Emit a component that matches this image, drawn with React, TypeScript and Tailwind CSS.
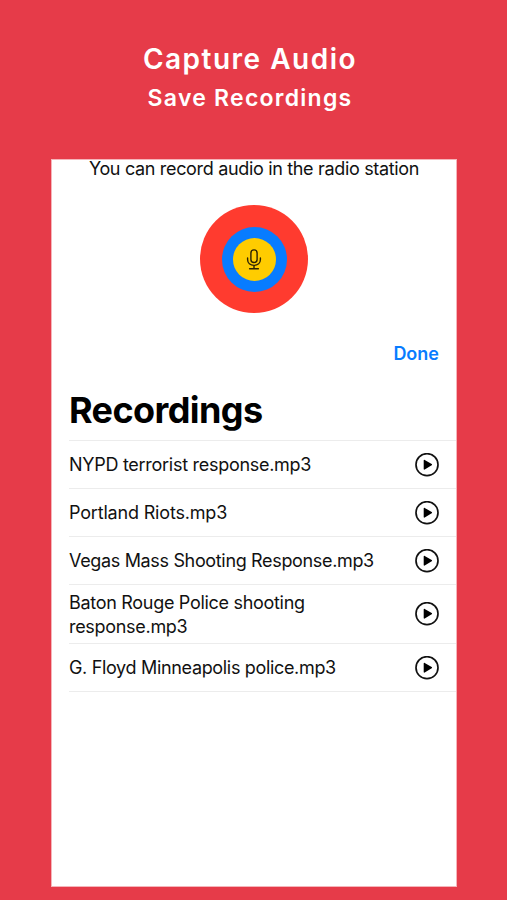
const recordings = [
  { name: 'NYPD terrorist response.mp3', height: 'h-12', tracking: 'tracking-[-0.28px]' },
  { name: 'Portland Riots.mp3', height: 'h-12', tracking: 'tracking-[-0.18px]' },
  { name: 'Vegas Mass Shooting Response.mp3', height: 'h-12', tracking: 'tracking-[-0.34px]' },
  { name: 'Baton Rouge Police shooting response.mp3', height: 'h-[59px]', tracking: 'tracking-[-0.3px]' },
  { name: 'G. Floyd Minneapolis police.mp3', height: 'h-12', tracking: 'tracking-[-0.33px]' },
];

function PlayIcon() {
  return (
    <svg width="24" height="24" viewBox="0 0 24 24" className="shrink-0" aria-hidden="true">
      <circle cx="12" cy="11.7" r="11" fill="none" stroke="#111" strokeWidth="1.7" />
      <path d="M8.7 7.4v8.6c0 .6.5.8 1 .5l7-4.2c.5-.3.5-.9 0-1.2l-7-4.2c-.5-.3-1-.1-1 .5z" fill="#000" />
    </svg>
  );
}

function MicIcon() {
  return (
    <svg width="16" height="22" viewBox="0 0 16 22" fill="none" stroke="#2b2204" strokeWidth="1.4" strokeLinecap="round" aria-hidden="true">
      <rect x="4.9" y="1.9" width="6.2" height="12.6" rx="3.1" />
      <path d="M1.6 9.9v1.7c0 3.5 2.6 5.8 6.4 5.8s6.4-2.3 6.4-5.8V9.9M8 17.4v3.3M3.6 20.7h8.8" />
    </svg>
  );
}

export default function App() {
  return (
    <div className="flex h-[900px] w-[507px] flex-col overflow-hidden bg-[#e63b49] font-['Inter',sans-serif]">
      <header className="flex h-[159px] flex-col items-center pr-[7px] pt-[41px] text-white">
        <h1 className="whitespace-nowrap text-[28px] font-semibold leading-9 tracking-[1.5px]">Capture Audio</h1>
        <h2 className="mt-[3px] whitespace-nowrap text-[23px] font-semibold leading-9 tracking-[1.25px]">Save Recordings</h2>
      </header>
      <main className="ml-[51px] flex h-[728px] w-[406px] flex-col border border-[#f5b5ba] bg-white">
        <p className="h-[45px] whitespace-nowrap pt-px text-center text-[18px] leading-4 tracking-[-0.33px] text-[#111]">
          You can record audio in the radio station
        </p>
        <button className="flex size-[108px] items-center justify-center self-center rounded-full bg-[#ff3b2f]">
          <span className="flex size-[65px] items-center justify-center rounded-full bg-[#087cff]">
            <span className="flex size-[43px] items-center justify-center rounded-full bg-[#ffcc00]">
              <MicIcon />
            </span>
          </span>
        </button>
        <button className="mr-[17px] mt-[29px] self-end text-[18px] font-semibold leading-6 text-[#087cff]">Done</button>
        <h3 className="ml-[17px] mt-5 whitespace-nowrap text-[36px] font-bold leading-[48px] tracking-[-0.6px] text-black">Recordings</h3>
        <ul className="ml-[17px] mt-[6px] border-t border-[#ececec]">
          {recordings.map((item) => (
            <li key={item.name} className={`flex items-center justify-between border-b border-[#ececec] pr-[17px] ${item.height}`}>
              <span className={`w-[310px] pt-px text-[18px] leading-6 text-[#111] ${item.tracking}`}>{item.name}</span>
              <PlayIcon />
            </li>
          ))}
        </ul>
      </main>
    </div>
  );
}
